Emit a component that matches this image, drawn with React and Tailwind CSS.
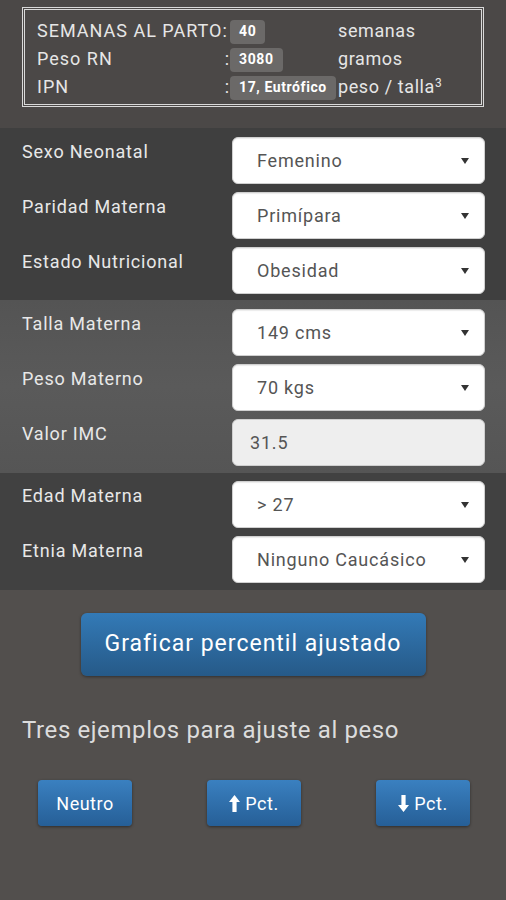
import React from 'react';

const font = { fontFamily: 'Roboto, "Liberation Sans", sans-serif' };

const resumen = [
  { label: 'SEMANAS AL PARTO:', colon: false, value: '40', unit: 'semanas' },
  { label: 'Peso RN', colon: true, value: '3080', unit: 'gramos' },
  { label: 'IPN', colon: true, value: '17, Eutrófico', unit: 'peso / talla', sup: '3' },
];

const grupos = [
  {
    bg: 'bg-[#3f3f3f]',
    pad: 'pt-[9px] pb-[6px]',
    filas: [
      { label: 'Sexo Neonatal', value: 'Femenino' },
      { label: 'Paridad Materna', value: 'Primípara' },
      { label: 'Estado Nutricional', value: 'Obesidad' },
    ],
  },
  {
    bg: 'bg-gradient-to-b from-[#545454] via-[#5a5a5a] to-[#555555]',
    pad: 'pt-[9px] pb-[7px]',
    filas: [
      { label: 'Talla Materna', value: '149 cms' },
      { label: 'Peso Materno', value: '70 kgs' },
      { label: 'Valor IMC', value: '31.5', readOnly: true },
    ],
  },
  {
    bg: 'bg-[#414141]',
    pad: 'pt-[8px] pb-[7px]',
    filas: [
      { label: 'Edad Materna', value: '> 27' },
      { label: 'Etnia Materna', value: 'Ninguno Caucásico' },
    ],
  },
];

function Caret() {
  return (
    <svg width="8" height="6" viewBox="0 0 8 6" className="shrink-0">
      <path d="M0 0h8L4 6z" fill="#333" />
    </svg>
  );
}

function Campo({ value, readOnly }) {
  if (readOnly) {
    return (
      <div className="flex h-[47px] w-[253px] items-center rounded-[6px] border border-[#cfcfcf] bg-[#eeeeee] pl-[17px] text-[18px] tracking-[0.8px] text-[#555]">
        {value}
      </div>
    );
  }
  return (
    <div className="flex h-[47px] w-[253px] items-center justify-between rounded-[6px] border border-[#d0d0d0] bg-white pl-[24px] pr-[15px] text-[18px] tracking-[0.8px] text-[#555] shadow-[inset_0_1px_1px_rgba(0,0,0,0.08)]">
      <span>{value}</span>
      <Caret />
    </div>
  );
}

function Flecha({ up }) {
  return (
    <svg width="11" height="17" viewBox="0 0 11 17" className="mr-[5px]">
      {up ? (
        <path d="M5.5 0L11 7H7.6V17H3.4V7H0z" fill="white" />
      ) : (
        <path d="M5.5 17L11 10H7.6V0H3.4V10H0z" fill="white" />
      )}
    </svg>
  );
}

function BotonChico({ children }) {
  return (
    <button className="flex h-[46px] w-[94px] items-center justify-center rounded-[4px] bg-gradient-to-b from-[#3a80c0] to-[#265f97] text-[18px] tracking-[0.5px] text-white shadow-[0_1px_3px_rgba(0,0,0,0.45)]">
      {children}
    </button>
  );
}

export default function App() {
  return (
    <div style={font} className="min-h-[900px] w-[506px] bg-[#524f4d] text-[#e6e6e6]">
      {/* Resumen */}
      <div className="bg-[#4b4847] px-[22px] pt-[7px] pb-[21px]">
        <div className="border-[3px] border-double border-[#d9d9d9] pl-[12px] pt-[6px] pb-[4px]">
          {resumen.map((r) => (
            <div key={r.label} className="grid h-[28px] grid-cols-[193px_108px_1fr] items-center text-[18px] tracking-[1px]">
              <div className="flex justify-between whitespace-nowrap">
                <span>{r.label}</span>
                {r.colon && <span>:</span>}
              </div>
              <div>
                <span className="inline-flex h-[24px] items-center rounded-[4px] bg-[#6b6968] px-[9px] text-[14px] font-bold tracking-[0.6px] text-white">
                  {r.value}
                </span>
              </div>
              <div className="whitespace-nowrap tracking-[0.6px]">
                {r.unit}
                {r.sup && <sup className="text-[12px]">{r.sup}</sup>}
              </div>
            </div>
          ))}
        </div>
      </div>

      {/* Formulario */}
      {grupos.map((g, i) => (
        <div key={i} className={`${g.bg} ${g.pad} flex flex-col gap-[8px] pl-[22px] pr-[21px]`}>
          {g.filas.map((f) => (
            <div key={f.label} className="flex justify-between">
              <div className="pt-[1px] text-[18px] tracking-[0.8px] text-[#e8e8e8]">{f.label}</div>
              <Campo value={f.value} readOnly={f.readOnly} />
            </div>
          ))}
        </div>
      ))}

      {/* Acciones */}
      <div className="flex justify-center pt-[23px]">
        <button className="h-[63px] w-[345px] rounded-[6px] bg-gradient-to-b from-[#337ab7] to-[#265a88] text-[23px] tracking-[1px] text-white shadow-[0_1px_3px_rgba(0,0,0,0.4)]">
          Graficar percentil ajustado
        </button>
      </div>

      <div className="px-[22px] pt-[36px] text-[24px] leading-[36px] tracking-[0.6px] text-[#dcdcdc]">
        Tres ejemplos para ajuste al peso
      </div>

      <div className="flex justify-between pl-[38px] pr-[36px] pt-[32px]">
        <BotonChico>Neutro</BotonChico>
        <BotonChico>
          <Flecha up />
          Pct.
        </BotonChico>
        <BotonChico>
          <Flecha />
          Pct.
        </BotonChico>
      </div>
    </div>
  );
}
